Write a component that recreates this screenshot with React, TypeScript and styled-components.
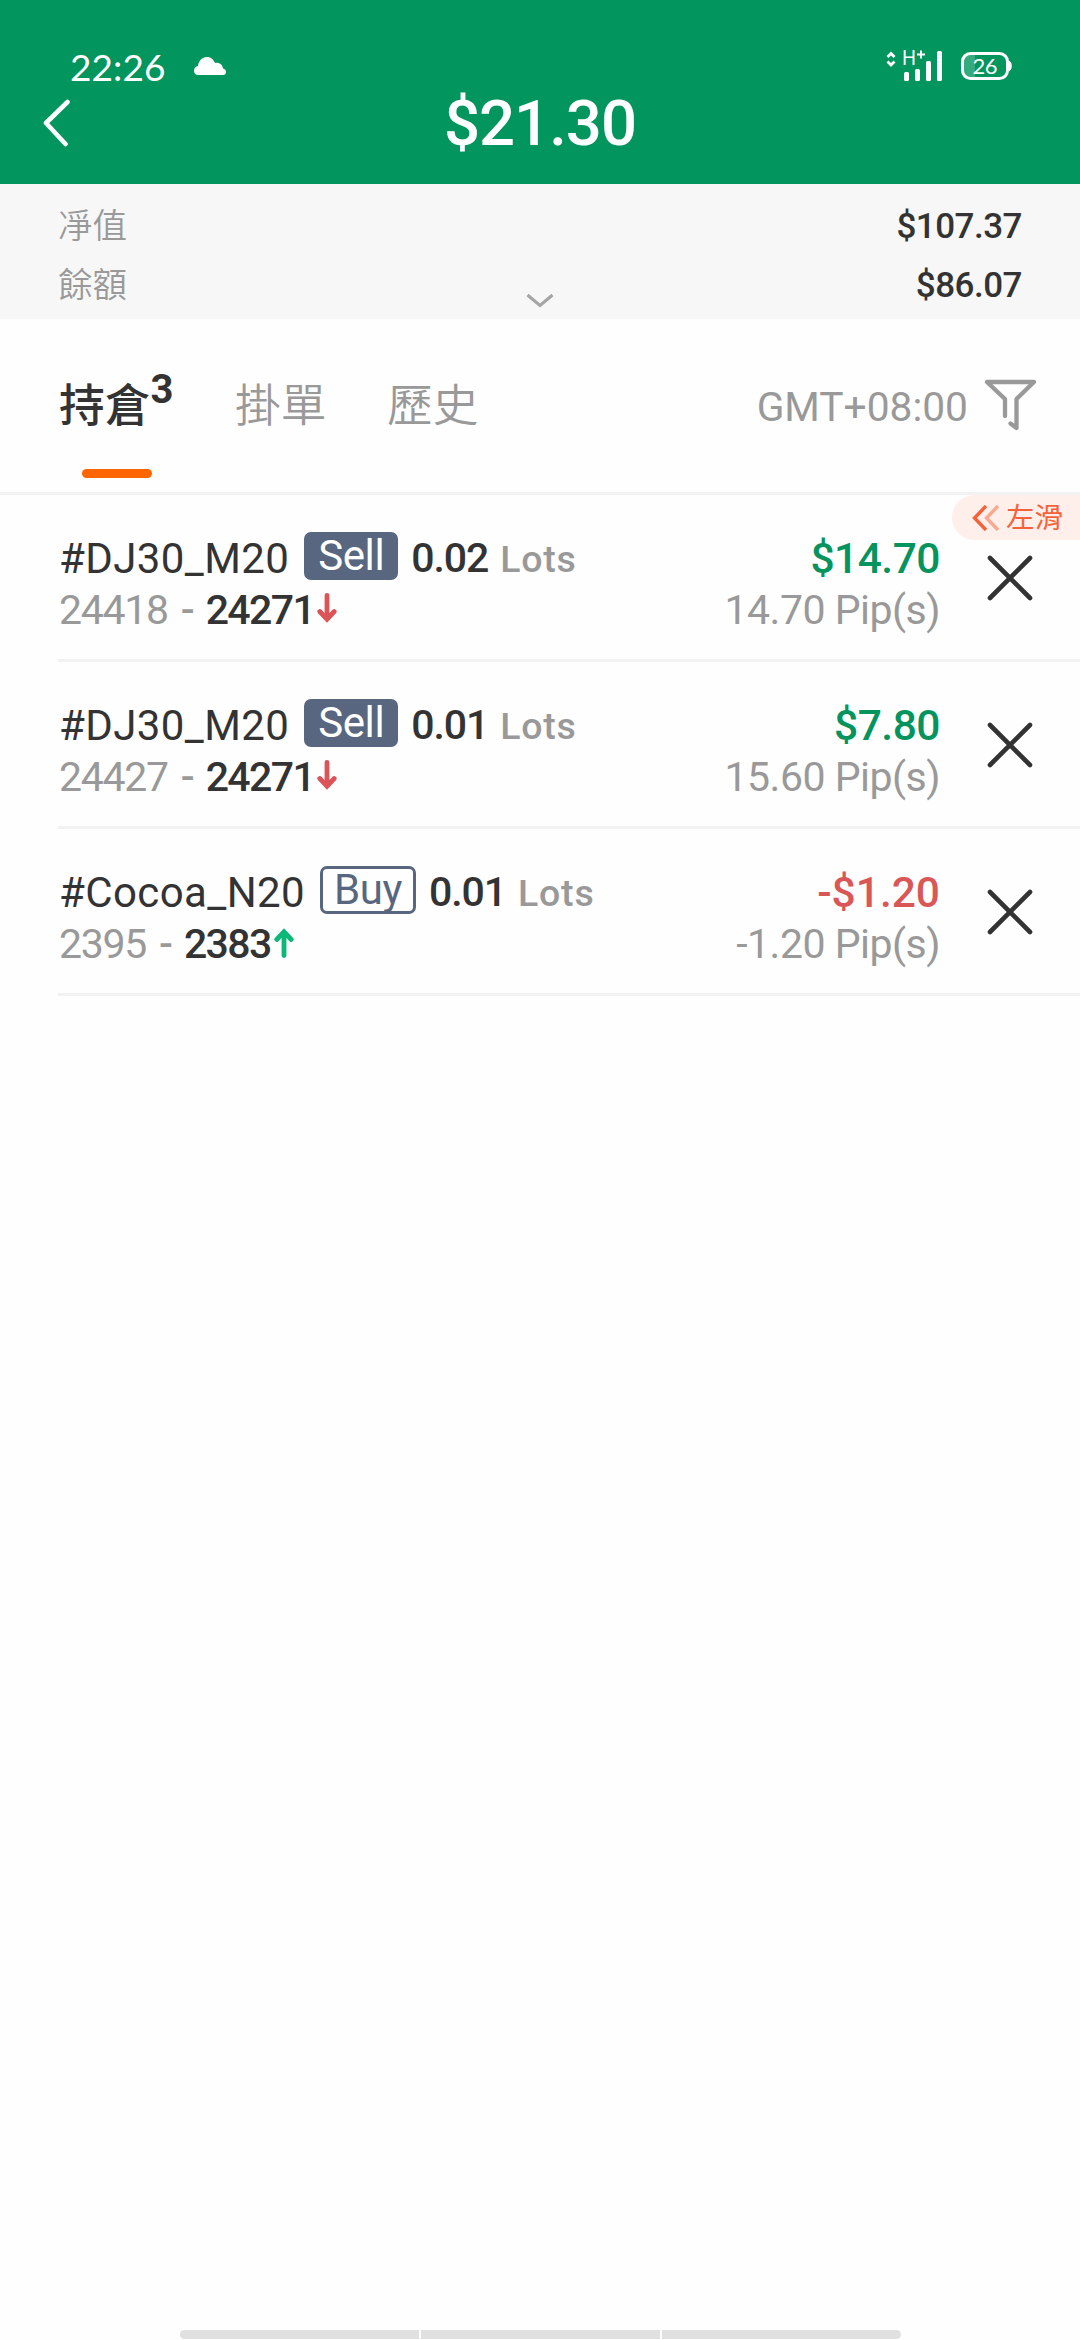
import React from "react";
import styled, { createGlobalStyle } from "styled-components";

const GlobalStyle = createGlobalStyle`
  * { box-sizing: border-box; }
  body {
    margin: 0;
    background: #fefefe;
    font-family: Roboto, "Noto Sans CJK TC", sans-serif;
    color: #333;
    overflow: hidden;
  }
  svg { display: block; flex: none; }
`;

const Screen = styled.main`
  width: 1080px;
  height: 2340px;
  display: flex;
  flex-direction: column;
  background: #fefefe;
  white-space: nowrap;
`;

const Header = styled.header`
  height: 184px;
  background: #02955e;
  color: #fff;
  padding-top: 44px;
`;

const StatusBar = styled.div`
  height: 44px;
  display: flex;
  align-items: center;
  padding: 0 68px 0 70px;
`;

const Clock = styled.span`
  width: 124px;
  font: 400 37px/44px Lato, sans-serif;
  letter-spacing: 0.1px;
  padding-top: 2px;
`;

const StatusRight = styled.div`
  display: flex;
  align-items: center;
  margin-left: auto;
  gap: 18px;
`;

const TitleBar = styled.div`
  height: 70px;
  display: grid;
  grid-template-columns: 120px 1fr 120px;
  align-items: center;
`;

const BackButton = styled.button`
  border: 0;
  background: none;
  height: 70px;
  padding: 0 0 5px 40px;
  color: #fff;
`;

const Title = styled.h1`
  margin: 0;
  text-align: center;
  font-size: 63.5px;
  line-height: 72px;
  font-weight: 500;
  letter-spacing: -1px;
`;

const Summary = styled.section`
  height: 135px;
  background: #f7f7f7;
  padding: 11px 58px 0 58px;
  position: relative;
`;

const SummaryRow = styled.div`
  height: 59px;
  display: flex;
  justify-content: space-between;
`;

const SummaryLabel = styled.span`
  font-size: 34.5px;
  line-height: 62px;
  color: #999;
  font-weight: 350;
`;

const SummaryValue = styled.span`
  font-size: 35px;
  line-height: 63px;
  font-weight: 500;
  letter-spacing: -0.5px;
`;

const Expand = styled.button`
  position: absolute;
  left: 526px;
  top: 110px;
  border: 0;
  background: none;
  padding: 0;
`;

const TabBar = styled.nav`
  height: 176px;
  border-bottom: 3px solid #f2f2f2;
  padding: 0 43px 0 59px;
  display: flex;
  align-items: flex-start;
`;

const Tab = styled.div<{ $active?: boolean; $width: number }>`
  width: ${(p) => p.$width}px;
  height: 173px;
  font-size: 45.7px;
  line-height: 176px;
  font-weight: ${(p) => (p.$active ? 500 : 350)};
  color: ${(p) => (p.$active ? "#333" : "#999")};
  position: relative;
`;

const Count = styled.sup`
  font-size: 40px;
  font-weight: 700;
  line-height: 0;
  vertical-align: 19px;
`;

const Underline = styled.i`
  position: absolute;
  left: 23px;
  bottom: 14px;
  width: 70px;
  height: 9px;
  border-radius: 5px;
  background: #ff6600;
`;

const Timezone = styled.div`
  margin-left: auto;
  display: flex;
  align-items: center;
  gap: 16px;
  height: 173px;
  color: #999;
  font-size: 40.7px;
  line-height: 60px;

  span { padding-top: 3px; }
  svg { margin-top: -2px; }
`;

const List = styled.section`
  position: relative;
  padding-left: 58px;
`;

const Row = styled.article`
  height: 167px;
  border-bottom: 3px solid #f2f2f2;
  padding-top: 37px;
  display: flex;
`;

const Info = styled.div`
  flex: 1;
  padding-left: 1px;
`;

const Line = styled.div<{ $end?: boolean }>`
  display: flex;
  height: 48px;
  line-height: 53px;
  justify-content: ${(p) => (p.$end ? "flex-end" : "flex-start")};
`;

const PriceLine = styled(Line)`
  height: 61px;
  line-height: 61px;
`;

const Symbol = styled.span`
  font-size: 42px;
  letter-spacing: 0.4px;
`;

const Side = styled.span<{ $buy: boolean }>`
  display: block;
  height: 48px;
  width: ${(p) => (p.$buy ? 96 : 94)}px;
  margin: 0 13px 0 15px;
  border: 3px solid #58677f;
  border-radius: 7px;
  background: ${(p) => (p.$buy ? "transparent" : "#58677f")};
  color: ${(p) => (p.$buy ? "#58677f" : "#fff")};
  font-size: 42px;
  line-height: 42px;
  text-align: center;
  letter-spacing: -0.4px;
`;

const Volume = styled.span`
  font-size: 41px;
  font-weight: 500;
  letter-spacing: -1.1px;
`;

const Unit = styled.span`
  font-size: 37.5px;
  color: #999;
  letter-spacing: 0.8px;
  margin-left: 12px;
`;

const Open = styled.span`
  font-size: 41px;
  color: #999;
  letter-spacing: -1.3px;
`;

const Current = styled.span`
  font-size: 41px;
  font-weight: 500;
  letter-spacing: -1.6px;
  margin-left: 11px;
  margin-right: 3px;
`;

const Dash = styled.span`
  font-size: 41px;
  color: #999;
  font-weight: 500;
  margin-left: 13px;
`;

const Result = styled.div`
  width: 260px;
`;

const Profit = styled.span<{ $loss: boolean }>`
  font-size: 42.5px;
  font-weight: 500;
  letter-spacing: ${(p) => (p.$loss ? 0 : -0.5)}px;
  color: ${(p) => (p.$loss ? "#d95757" : "#05935e")};
`;

const Pips = styled.span`
  font-size: 41px;
  color: #999;
  letter-spacing: -0.5px;
`;

const Close = styled.button`
  width: 140px;
  height: 164px;
  margin-top: -37px;
  padding: 2px 0 0 46px;
  border: 0;
  background: none;
`;

const SwipeHint = styled.div`
  position: absolute;
  right: 0;
  top: 0;
  width: 128px;
  height: 45px;
  border-radius: 23px 0 0 23px;
  background: #ffefea;
  color: #f5623a;
  display: flex;
  align-items: center;
  gap: 6px;
  padding-left: 20px;
  font-size: 28.5px;
  line-height: 45px;

  span { padding-top: 2px; }
`;

const NavHint = styled.footer`
  margin-top: auto;
  height: 10px;
  display: grid;
  grid-template-columns: 239px 239px 239px;
  justify-content: center;
  gap: 2px;
  padding-bottom: 1px;
  i { background: #e0e0e0; }
  i:first-child { border-radius: 5px 0 0 5px; }
  i:last-child { border-radius: 0 5px 5px 0; }
`;

const CloudIcon = () => (
  <svg width="32" height="18" viewBox="0 0 32 18" fill="#fff">
    <path d="M4 18a4 4 0 0 1-4-4.500A5 5 0 0 1 4 9C4.500 4 8 0 13 0c4 0 6.500 2.500 8 6 4-.7 7.500 1.500 8 5.500 2 .5 3 1.700 3 3.500 0 2-1 3-3 3Z" />
  </svg>
);

const SignalIcon = () => (
  <svg width="57" height="50" viewBox="0 -8 57 50" fill="#fff" stroke="none">
    <path d="M1.500 8 5 4.500 8.500 8M1.500 12.500 5 16l3.500-3.500" fill="none" stroke="#fff" strokeWidth="2.800" />
    <text x="16" y="16" fontFamily="Lato" fontSize="20.500" textLength="14" lengthAdjust="spacingAndGlyphs">H</text>
    <path d="M31 5.500h8M35 1.500v8" stroke="#fff" strokeWidth="2" />
    <rect x="18" y="23" width="5" height="9" rx="1.500" />
    <rect x="29" y="20" width="5" height="12" rx="1.500" />
    <rect x="40" y="12" width="5" height="20" rx="1.500" />
    <rect x="51" y="2" width="5" height="30" rx="1.500" />
  </svg>
);

const BatteryIcon = () => (
  <svg width="51" height="28" viewBox="0 0 51 28">
    <path d="M9 3h5v22H9a6 6 0 0 1-6-6V9a6 6 0 0 1 6-6Z" fill="#fff" opacity=".2" />
    <rect x="1.500" y="1.500" width="45" height="25" rx="8" fill="none" stroke="#fff" strokeWidth="3" />
    <path d="M48 9c3 1 3 9 0 10Z" fill="#fff" stroke="#fff" />
    <text x="24" y="22" textAnchor="middle" fill="#fff" fontFamily="Lato" fontSize="22" textLength="25">26</text>
  </svg>
);

const BackIcon = () => (
  <svg width="32" height="50" viewBox="0 0 32 50" fill="none" stroke="#fff" strokeWidth="4.600" strokeLinecap="round" strokeLinejoin="round">
    <path d="M27.500 5 6 26l19.500 21" />
  </svg>
);

const ExpandIcon = () => (
  <svg width="28" height="14" viewBox="0 0 28 14" fill="none" stroke="#a6a6a6" strokeWidth="3.200">
    <path d="m1.500 1 12.500 10.500L26.500 1" />
  </svg>
);

const FilterIcon = () => (
  <svg width="53" height="54" viewBox="0 0 53 54" fill="none" stroke="#999" strokeWidth="4.300" strokeLinecap="round" strokeLinejoin="round">
    <path d="M21 38V21L3 4h47L32.500 21v29l-6-4.500" />
  </svg>
);

const CloseIcon = () => (
  <svg width="48" height="48" viewBox="0 0 48 48" stroke="#333" strokeWidth="4.600" strokeLinecap="round">
    <path d="m4 4 40 40M44 4 4 44" />
  </svg>
);

const SwipeIcon = () => (
  <svg width="28" height="26" viewBox="0 0 28 26" fill="none" stroke="#f5623a" strokeWidth="3.400">
    <path d="M14 1 2.500 13 14 25" />
    <path d="M26 1 14.500 13 26 25" opacity=".5" />
  </svg>
);

const ArrowIcon = ({ up }: { up: boolean }) => (
  <svg width="20" height="61" viewBox="0 -13 20 61" fill="none" stroke={up ? "#0cb877" : "#dc5458"} strokeWidth="4.800" strokeLinecap="round" strokeLinejoin="miter">
    <path d={up ? "M10 28.500V5M2.800 12.500 10 4.700l7.200 7.800" : "M10 2.500V26M2.800 18.500 10 26.300l7.200-7.800"} />
  </svg>
);

type Position = {
  symbol: string;
  side: "Sell" | "Buy";
  lots: string;
  open: string;
  current: string;
  up: boolean;
  profit: string;
  pips: string;
};

const positions: Position[] = [
  { symbol: "#DJ30_M20", side: "Sell", lots: "0.02", open: "24418", current: "24271", up: false, profit: "$14.70", pips: "14.70 Pip(s)" },
  { symbol: "#DJ30_M20", side: "Sell", lots: "0.01", open: "24427", current: "24271", up: false, profit: "$7.80", pips: "15.60 Pip(s)" },
  { symbol: "#Cocoa_N20", side: "Buy", lots: "0.01", open: "2395", current: "2383", up: true, profit: "-$1.20", pips: "-1.20 Pip(s)" },
];

const PositionRow = ({ p }: { p: Position }) => (
  <Row>
    <Info>
      <Line>
        <Symbol>{p.symbol}</Symbol>
        <Side $buy={p.side === "Buy"}>{p.side}</Side>
        <Volume>
          {p.lots}
          <Unit>Lots</Unit>
        </Volume>
      </Line>
      <PriceLine>
        <Open>{p.open}</Open>
        <Dash>-</Dash>
        <Current>{p.current}</Current>
        <ArrowIcon up={p.up} />
      </PriceLine>
    </Info>
    <Result>
      <Line $end>
        <Profit $loss={p.profit.startsWith("-")}>{p.profit}</Profit>
      </Line>
      <PriceLine $end>
        <Pips>{p.pips}</Pips>
      </PriceLine>
    </Result>
    <Close aria-label="Close">
      <CloseIcon />
    </Close>
  </Row>
);

export default function App() {
  return (
    <>
      <GlobalStyle />
      <Screen>
        <Header>
          <StatusBar>
            <Clock>22:26</Clock>
            <CloudIcon />
            <StatusRight>
              <SignalIcon />
              <BatteryIcon />
            </StatusRight>
          </StatusBar>
          <TitleBar>
            <BackButton aria-label="Back">
              <BackIcon />
            </BackButton>
            <Title>$21.30</Title>
          </TitleBar>
        </Header>
        <Summary>
          <SummaryRow>
            <SummaryLabel>凈值</SummaryLabel>
            <SummaryValue>$107.37</SummaryValue>
          </SummaryRow>
          <SummaryRow>
            <SummaryLabel>餘額</SummaryLabel>
            <SummaryValue>$86.07</SummaryValue>
          </SummaryRow>
          <Expand aria-label="Expand">
            <ExpandIcon />
          </Expand>
        </Summary>
        <TabBar>
          <Tab $active $width={176}>
            持倉<Count>3</Count>
            <Underline />
          </Tab>
          <Tab $width={152}>掛單</Tab>
          <Tab $width={100}>歷史</Tab>
          <Timezone>
            <span>GMT+08:00</span>
            <FilterIcon />
          </Timezone>
        </TabBar>
        <List>
          {positions.map((p, i) => (
            <PositionRow key={i} p={p} />
          ))}
          <SwipeHint>
            <SwipeIcon />
            <span>左滑</span>
          </SwipeHint>
        </List>
        <NavHint>
          <i />
          <i />
          <i />
        </NavHint>
      </Screen>
    </>
  );
}
